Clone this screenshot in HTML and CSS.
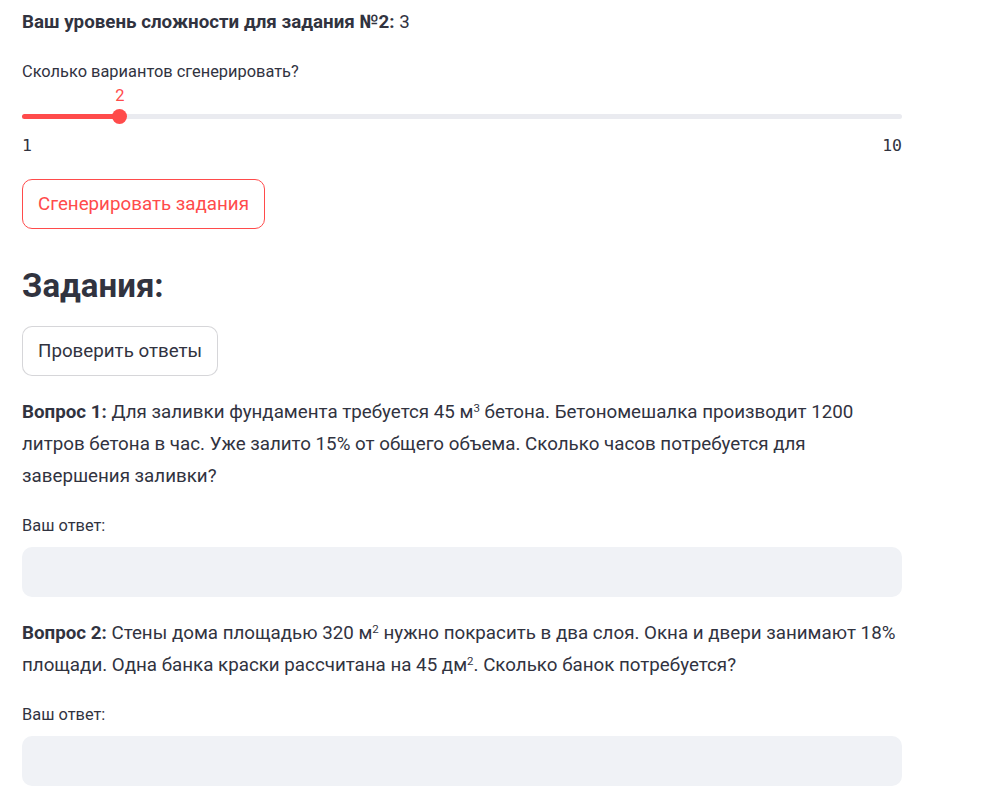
FILE: index.html
```html
<!DOCTYPE html>
<html lang="ru">
<head>
<meta charset="utf-8">
<title>Задания</title>
<link rel="stylesheet" href="styles.css">
</head>
<body>
<main class="app">
  <p class="text level"><strong>Ваш уровень сложности для задания №2:</strong> 3</p>

  <div class="slider">
    <label class="wlabel">Сколько вариантов сгенерировать?</label>
    <div class="slider-body">
      <div class="track">
        <div class="fill" style="width: 11.111%"></div>
        <div class="thumb" style="left: 11.111%"><span class="thumb-value">2</span></div>
      </div>
      <div class="ticks"><span>1</span><span>10</span></div>
    </div>
  </div>

  <div class="row"><button class="btn btn-primary">Сгенерировать задания</button></div>

  <h3 class="heading">Задания:</h3>

  <div class="row"><button class="btn">Проверить ответы</button></div>

  <p class="text q"><strong>Вопрос 1:</strong> Для заливки фундамента требуется 45 м<sup>3</sup> бетона. Бетономешалка производит 1200 литров бетона в час. Уже залито 15% от общего объема. Сколько часов потребуется для завершения заливки?</p>

  <div class="field">
    <label class="wlabel">Ваш ответ:</label>
    <div class="input"></div>
  </div>

  <p class="text q"><strong>Вопрос 2:</strong> Стены дома площадью 320 м<sup>2</sup> нужно покрасить в два слоя. Окна и двери занимают 18% площади. Одна банка краски рассчитана на 45 дм<sup>2</sup>. Сколько банок потребуется?</p>

  <div class="field">
    <label class="wlabel">Ваш ответ:</label>
    <div class="input"></div>
  </div>
</main>
</body>
</html>
```

FILE: styles.css
```css
* { box-sizing: border-box; }

html, body {
  margin: 0;
  padding: 0;
  background: #ffffff;
}

body {
  font-family: Roboto, "Noto Sans", sans-serif;
  color: rgb(49, 51, 63);
}

.app {
  width: 880px;
  margin-left: 22px;
  padding-top: 6px;
  display: flex;
  flex-direction: column;
  gap: 20px;
}

.text {
  margin: 0;
  font-size: 18.75px;
  line-height: 32px;
}

.text strong { font-weight: 700; }

.text sup {
  font-size: 11.5px;
  line-height: 0;
  vertical-align: 6px;
}

.wlabel {
  display: block;
  font-size: 16.4px;
  line-height: 28px;
}

/* slider */
.slider-body {
  padding-top: 28px;
  padding-bottom: 3px;
}

.track {
  position: relative;
  height: 5px;
  border-radius: 3px;
  background: rgb(234, 235, 240);
}

.fill {
  height: 100%;
  border-radius: 3px;
  background: rgb(255, 75, 75);
}

.thumb {
  position: absolute;
  top: 50%;
  width: 15px;
  height: 15px;
  margin-left: -7.5px;
  margin-top: -7.5px;
  border-radius: 50%;
  background: rgb(255, 75, 75);
}

.thumb-value {
  position: absolute;
  left: 50%;
  bottom: 19px;
  transform: translateX(-50%);
  font-size: 16.4px;
  line-height: 18px;
  color: rgb(255, 75, 75);
}

.ticks {
  display: flex;
  justify-content: space-between;
  margin-top: 17px;
  font-family: "DejaVu Sans Mono", "Liberation Mono", monospace;
  font-size: 16.5px;
  line-height: 20px;
}

/* buttons */
.row { display: flex; }

.btn {
  display: inline-flex;
  align-items: center;
  height: 50px;
  padding: 0 15px;
  border: 1px solid rgba(49, 51, 63, 0.2);
  border-radius: 10px;
  background: #ffffff;
  font-family: inherit;
  font-size: 18.75px;
  color: rgb(49, 51, 63);
}

.btn-primary {
  border-color: rgb(255, 75, 75);
  color: rgb(255, 75, 75);
}

.heading {
  margin: 0;
  padding-top: 16px;
  font-size: 33px;
  line-height: 41px;
  font-weight: 700;
}

/* inputs */
.field .input {
  margin-top: 7px;
  height: 50px;
  border-radius: 10px;
  background: rgb(240, 242, 246);
}
```
